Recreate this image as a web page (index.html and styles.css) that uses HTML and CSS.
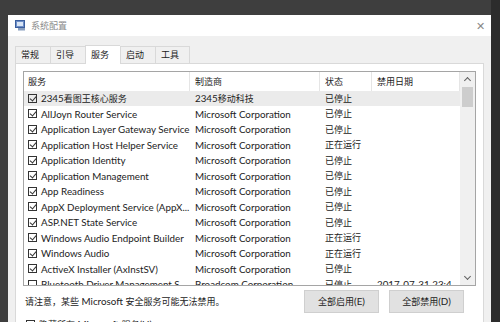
FILE: index.html
```html
<!DOCTYPE html>
<html lang="zh-CN">
<head>
    <meta charset="UTF-8">
    <title>系统配置</title>
    <link rel="stylesheet" href="styles.css">
</head>
<body>
    <div class="window">
        <div class="titlebar">
            <svg class="app-icon" width="11" height="11" viewBox="0 0 11 11">
                <rect x="0.5" y="0.5" width="9" height="7" fill="#6f8fc8" stroke="#3b5f9e"/>
                <rect x="2" y="2" width="6" height="4" fill="#d9e6f7"/>
                <rect x="3" y="8" width="7" height="2.5" fill="#8a9fbf"/>
            </svg>
            <span class="title cn">系统配置</span>
            <span class="close">✕</span>
        </div>

        <div class="tabs">
            <div class="tab cn">常规</div>
            <div class="tab cn">引导</div>
            <div class="tab active cn">服务</div>
            <div class="tab cn">启动</div>
            <div class="tab cn">工具</div>
        </div>

        <div class="panel">
            <div class="list">
                <div class="list-main">
                    <div class="row head">
                        <div class="c1 cn">服务</div>
                        <div class="c2 cn">制造商</div>
                        <div class="c3 cn">状态</div>
                        <div class="c4 cn">禁用日期</div>
                    </div>
                    <div class="row sel">
                        <div class="c1"><i class="cb on"></i><span>2345<span class="cn">看图王核心服务</span></span></div>
                        <div class="c2">2345<span class="cn">移动科技</span></div>
                        <div class="c3 cn">已停止</div>
                        <div class="c4"></div>
                    </div>
                    <div class="row">
                        <div class="c1"><i class="cb on"></i><span>AllJoyn Router Service</span></div>
                        <div class="c2">Microsoft Corporation</div>
                        <div class="c3 cn">已停止</div>
                        <div class="c4"></div>
                    </div>
                    <div class="row">
                        <div class="c1"><i class="cb on"></i><span>Application Layer Gateway Service</span></div>
                        <div class="c2">Microsoft Corporation</div>
                        <div class="c3 cn">已停止</div>
                        <div class="c4"></div>
                    </div>
                    <div class="row">
                        <div class="c1"><i class="cb on"></i><span>Application Host Helper Service</span></div>
                        <div class="c2">Microsoft Corporation</div>
                        <div class="c3 cn">正在运行</div>
                        <div class="c4"></div>
                    </div>
                    <div class="row">
                        <div class="c1"><i class="cb on"></i><span>Application Identity</span></div>
                        <div class="c2">Microsoft Corporation</div>
                        <div class="c3 cn">已停止</div>
                        <div class="c4"></div>
                    </div>
                    <div class="row">
                        <div class="c1"><i class="cb on"></i><span>Application Management</span></div>
                        <div class="c2">Microsoft Corporation</div>
                        <div class="c3 cn">已停止</div>
                        <div class="c4"></div>
                    </div>
                    <div class="row">
                        <div class="c1"><i class="cb on"></i><span>App Readiness</span></div>
                        <div class="c2">Microsoft Corporation</div>
                        <div class="c3 cn">已停止</div>
                        <div class="c4"></div>
                    </div>
                    <div class="row">
                        <div class="c1"><i class="cb on"></i><span>AppX Deployment Service (AppX...</span></div>
                        <div class="c2">Microsoft Corporation</div>
                        <div class="c3 cn">已停止</div>
                        <div class="c4"></div>
                    </div>
                    <div class="row">
                        <div class="c1"><i class="cb on"></i><span>ASP.NET State Service</span></div>
                        <div class="c2">Microsoft Corporation</div>
                        <div class="c3 cn">已停止</div>
                        <div class="c4"></div>
                    </div>
                    <div class="row">
                        <div class="c1"><i class="cb on"></i><span>Windows Audio Endpoint Builder</span></div>
                        <div class="c2">Microsoft Corporation</div>
                        <div class="c3 cn">正在运行</div>
                        <div class="c4"></div>
                    </div>
                    <div class="row">
                        <div class="c1"><i class="cb on"></i><span>Windows Audio</span></div>
                        <div class="c2">Microsoft Corporation</div>
                        <div class="c3 cn">正在运行</div>
                        <div class="c4"></div>
                    </div>
                    <div class="row">
                        <div class="c1"><i class="cb on"></i><span>ActiveX Installer (AxInstSV)</span></div>
                        <div class="c2">Microsoft Corporation</div>
                        <div class="c3 cn">已停止</div>
                        <div class="c4"></div>
                    </div>
                    <div class="row">
                        <div class="c1"><i class="cb"></i><span>Bluetooth Driver Management S...</span></div>
                        <div class="c2">Broadcom Corporation</div>
                        <div class="c3 cn">已停止</div>
                        <div class="c4">2017-07-31 23:4...</div>
                    </div>
                </div>
                <div class="scrollbar">
                    <span class="arrow up"></span>
                    <span class="thumb"></span>
                    <span class="track"></span>
                    <span class="arrow down"></span>
                </div>
            </div>

            <div class="actions">
                <p class="note"><span class="cn">请注意，某些</span> Microsoft <span class="cn">安全服务可能无法禁用。</span></p>
                <button class="btn"><span class="cn">全部启用</span>(E)</button>
                <button class="btn"><span class="cn">全部禁用</span>(D)</button>
            </div>

            <label class="hide-ms"><i class="cb"></i><span><span class="cn">隐藏所有</span> Microsoft <span class="cn">服务</span>(H)</span></label>
        </div>
    </div>
</body>
</html>
```

FILE: styles.css
```css
* {
    box-sizing: border-box;
    margin: 0;
    padding: 0;
}

body {
    width: 500px;
    height: 322px;
    overflow: hidden;
    background: linear-gradient(to right, #3e3e3e 0, #3e3e3e 491px, #2c2c2c 491px);
    font-family: Lato, 'Noto Sans CJK SC', sans-serif;
    font-size: 9.8px;
    color: #222;
    padding: 15px 0 0 8px;
}

.cn {
    font-family: 'Noto Sans CJK SC', sans-serif;
    font-size: 9px;
}

.window {
    width: 483px;
    background: #f0f0f0;
    height: 307px;
    overflow: hidden;
}

.titlebar {
    height: 21px;
    background: #fff;
    display: flex;
    align-items: center;
    padding-left: 7px;
}

.app-icon {
    margin-right: 5px;
}

.title {
    color: #8a8a8a;
    flex: 1;
}

.close {
    color: #888;
    font-size: 11px;
    width: 18px;
    text-align: center;
    margin-right: 2px;
}

.tabs {
    display: flex;
    align-items: flex-end;
    padding: 7px 0 0 7px;
    height: 27px;
}

.tab {
    width: 35px;
    height: 17px;
    padding-left: 5px;
    line-height: 16px;
    border: 1px solid #d9d9d9;
    border-bottom: none;
    border-right: none;
    background: #f0f0f0;
}

.tab:last-child {
    border-right: 1px solid #d9d9d9;
}

.tab.active {
    height: 19px;
    background: #fff;
    line-height: 18px;
    position: relative;
    top: 1px;
}

.panel {
    margin: 0 7px;
    background: #fff;
    border: 1px solid #d9d9d9;
    border-bottom: none;
    padding: 7px 7px 0;
    height: 300px;
}

.list {
    display: flex;
    height: 215px;
    border: 1px solid #a5a5a5;
    overflow: hidden;
}

.list-main {
    flex: 1;
}

.row {
    display: flex;
    height: 15.5px;
    align-items: center;
    white-space: nowrap;
}

.row > div {
    overflow: hidden;
    display: flex;
    align-items: center;
}

.row.head {
    height: 18.5px;
}

.row.head > div {
    padding-left: 4px;
    height: 100%;
    border-right: 1px solid #e5e5e5;
}

.row.head > .c2,
.row.head > .c3,
.row.head > .c4 {
    padding-left: 5px;
}

.row.sel {
    background: #ebebeb;
}

.c1 {
    width: 166px;
    padding-left: 4px;
}

.c2 {
    width: 130px;
    padding-left: 5px;
}

.c3 {
    width: 52px;
    padding-left: 5px;
}

.c4 {
    flex: 1;
    padding-left: 5px;
}

.cb {
    display: inline-block;
    width: 9px;
    height: 9px;
    border: 1px solid #333;
    margin-right: 4px;
    flex-shrink: 0;
    position: relative;
}

.cb.on::after {
    content: '';
    position: absolute;
    left: 1.5px;
    top: 0;
    width: 3px;
    height: 5px;
    border: solid #333;
    border-width: 0 1px 1px 0;
    transform: rotate(40deg);
}

.scrollbar {
    width: 15px;
    background: #f0f0f0;
    display: flex;
    flex-direction: column;
    align-items: center;
}

.arrow {
    height: 15px;
    width: 15px;
    position: relative;
}

.arrow::after {
    content: '';
    position: absolute;
    left: 5px;
    width: 4px;
    height: 4px;
    border: solid #606060;
    border-width: 1px 0 0 1px;
}

.arrow.up::after {
    top: 6px;
    transform: rotate(45deg);
}

.arrow.down::after {
    top: 4px;
    transform: rotate(-135deg);
}

.thumb {
    width: 11px;
    height: 20px;
    background: #cdcdcd;
}

.track {
    flex: 1;
}

.actions {
    display: flex;
    align-items: center;
    margin-top: 4px;
    height: 23px;
}

.note {
    flex: 1;
    padding-left: 2px;
}

.btn {
    width: 75px;
    height: 23px;
    background: #e1e1e1;
    border: 1px solid #cfcfcf;
    font: inherit;
    color: #222;
    margin-left: 10px;
}

.btn:last-child {
    margin-right: 12px;
}

.hide-ms {
    display: flex;
    align-items: center;
    margin-top: 5px;
    padding-left: 3px;
}
```
